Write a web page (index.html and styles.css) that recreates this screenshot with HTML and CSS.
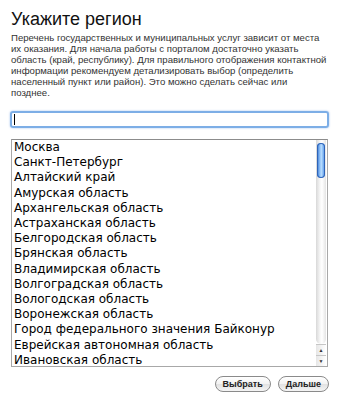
FILE: index.html
```html
<!DOCTYPE html>
<html lang="ru">
<head>
<meta charset="UTF-8">
<meta name="viewport" content="width=device-width, initial-scale=1.0">
<title>Укажите регион</title>
<link rel="stylesheet" href="styles.css">
</head>
<body>
    <div class="dialog">
        <h1 class="title">Укажите регион</h1>
        <p class="intro">Перечень государственных и муниципальных услуг зависит от места их оказания. Для начала работы с порталом достаточно указать область (край, республику). Для правильного отображения контактной информации рекомендуем детализировать выбор (определить населенный пункт или район). Это можно сделать сейчас или<br>позднее.</p>

        <div class="search"><span class="caret"></span></div>

        <div class="region-list">
            <ul class="items">
                <li>Москва</li>
                <li>Санкт-Петербург</li>
                <li>Алтайский край</li>
                <li>Амурская область</li>
                <li>Архангельская область</li>
                <li>Астраханская область</li>
                <li>Белгородская область</li>
                <li>Брянская область</li>
                <li>Владимирская область</li>
                <li>Волгоградская область</li>
                <li>Вологодская область</li>
                <li>Воронежская область</li>
                <li>Город федерального значения Байконур</li>
                <li>Еврейская автономная область</li>
                <li>Ивановская область</li>
            </ul>
            <div class="scrollbar">
                <div class="track">
                    <div class="thumb"></div>
                </div>
                <div class="arrow">&#9650;</div>
                <div class="arrow">&#9660;</div>
            </div>
        </div>

        <div class="actions">
            <button class="button">Выбрать</button>
            <button class="button">Дальше</button>
        </div>
    </div>
</body>
</html>
```

FILE: styles.css
```css
body {
    margin: 0;
    background-color: #FFFFFF;
    font-family: "Liberation Sans", Arial, sans-serif;
    color: #1a1a1a;
}
.dialog {
    padding: 8px 11px 0 10px;
}
.title {
    margin: 0 0 0 1px;
    font-size: 18px;
    font-weight: normal;
    line-height: 22px;
    color: #111;
}
.intro {
    margin: 2px 0 0 1px;
    font-size: 9.6px;
    line-height: 11px;
    color: #333;
}
.search {
    display: flex;
    align-items: center;
    height: 13px;
    margin-top: 13px;
    padding: 0 2px;
    border: 2px solid #7daee6;
    border-radius: 3px;
    box-shadow: 0 0 2px rgba(80, 140, 220, 0.6);
}
.caret {
    width: 1px;
    height: 11px;
    background-color: #000;
}
.region-list {
    display: flex;
    height: 226px;
    margin: 11px 1px 0 1px;
    border: 1px solid #a8a8a8;
    border-top-color: #8c8c8c;
    overflow: hidden;
}
.items {
    flex: 1;
    margin: 0;
    padding: 0 0 0 2px;
    list-style: none;
    font-family: "DejaVu Sans", sans-serif;
    font-size: 12px;
    line-height: 15.2px;
    color: #000;
    white-space: nowrap;
    overflow: hidden;
}
.scrollbar {
    display: flex;
    flex-direction: column;
    width: 10px;
    padding-right: 1px;
}
.track {
    flex: 1;
    padding: 3px 1px 0 1px;
    border-radius: 0 0 5px 5px;
    background: linear-gradient(to right, #d8d8d8, #f6f6f6 40%, #ffffff 60%, #e4e4e4);
}
.thumb {
    height: 35px;
    border-radius: 4px;
    background: linear-gradient(to right, #2d6fd2, #8ec0f6 35%, #b6dcff 55%, #4a8ee6);
    box-shadow: inset 0 0 0 1px #2f64b8;
}
.arrow {
    height: 10px;
    font-size: 5px;
    line-height: 10px;
    text-align: center;
    color: #333;
    background: linear-gradient(to right, #e6e6e6, #ffffff);
    border-top: 1px solid #c6c6c6;
}
.actions {
    display: flex;
    justify-content: flex-end;
    gap: 7px;
    margin: 9px 0 0 0;
}
.button {
    height: 16px;
    padding: 0 7px;
    border: 1px solid #8a8a8a;
    border-radius: 8px;
    background: linear-gradient(#ffffff, #f2f2f2 50%, #e2e2e2 51%, #f4f4f4);
    font-family: "Liberation Sans", Arial, sans-serif;
    font-size: 9px;
    font-weight: bold;
    color: #222;
    line-height: 14px;
}
```
